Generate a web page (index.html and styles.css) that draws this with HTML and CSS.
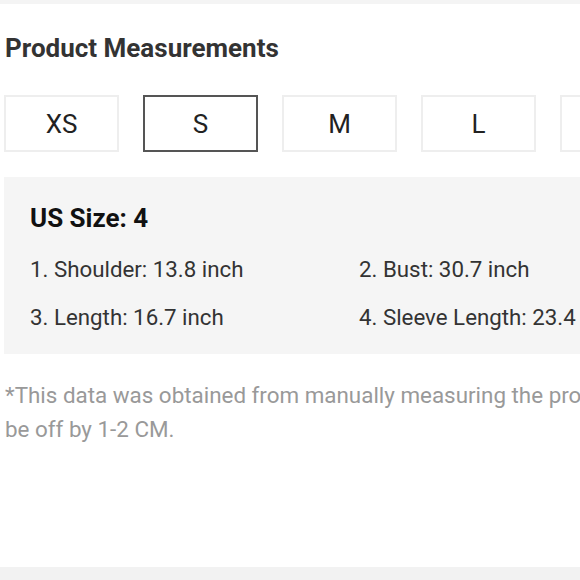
FILE: index.html
```html
<!DOCTYPE html>
<html>
<head>
<meta charset="utf-8">
<link rel="stylesheet" href="styles.css">
</head>
<body>
<div class="topbar"></div>
<main class="page">
  <h2 class="title">Product Measurements</h2>
  <div class="sizes">
    <div class="size">XS</div>
    <div class="size active">S</div>
    <div class="size">M</div>
    <div class="size">L</div>
    <div class="size">XL</div>
  </div>
  <section class="panel">
    <h3 class="us">US Size: 4</h3>
    <div class="grid">
      <div>1. Shoulder: 13.8 inch</div>
      <div>2. Bust: 30.7 inch</div>
      <div>3. Length: 16.7 inch</div>
      <div>4. Sleeve Length: 23.4 inch</div>
    </div>
  </section>
  <p class="note">*This data was obtained from manually measuring the product, it may be off by 1-2 CM.</p>
</main>
<div class="bottombar"></div>
</body>
</html>
```
FILE: styles.css
```css
html, body {
  margin: 0;
  padding: 0;
  background: #fff;
  font-family: Roboto, "Liberation Sans", sans-serif;
  overflow: hidden;
  width: 580px;
  height: 580px;
}
body {
  display: flex;
  flex-direction: column;
}
.topbar {
  height: 4px;
  background: #f4f4f4;
  flex: none;
}
.page {
  flex: 1;
  padding: 0 0 0 4px;
  width: 720px;
  min-height: 0;
}
.title {
  margin: 29px 0 0 1px;
  font-size: 26px;
  font-weight: 700;
  color: #333;
  line-height: 30px;
}
.sizes {
  display: flex;
  gap: 24px;
  margin-top: 32px;
}
.size {
  flex: none;
  width: 111px;
  height: 53px;
  border: 2px solid #eee;
  display: flex;
  align-items: center;
  justify-content: center;
  font-size: 26px;
  color: #222;
}
.size.active {
  border-color: #555;
}
.panel {
  margin-top: 25px;
  background: #f5f5f5;
  height: 177px;
  padding: 26px 0 0 26px;
  box-sizing: border-box;
}
.us {
  margin: 0;
  font-size: 26px;
  font-weight: 700;
  color: #111;
  line-height: 30px;
}
.grid {
  display: grid;
  grid-template-columns: 329px auto;
  row-gap: 20px;
  margin-top: 22px;
  font-size: 22.3px;
  color: #333;
  line-height: 28px;
  white-space: nowrap;
}
.note {
  margin: 24px 0 0 1px;
  width: 700px;
  font-size: 22.4px;
  line-height: 34px;
  color: #999;
}
.bottombar {
  height: 13px;
  background: #f2f2f2;
  flex: none;
}
```
